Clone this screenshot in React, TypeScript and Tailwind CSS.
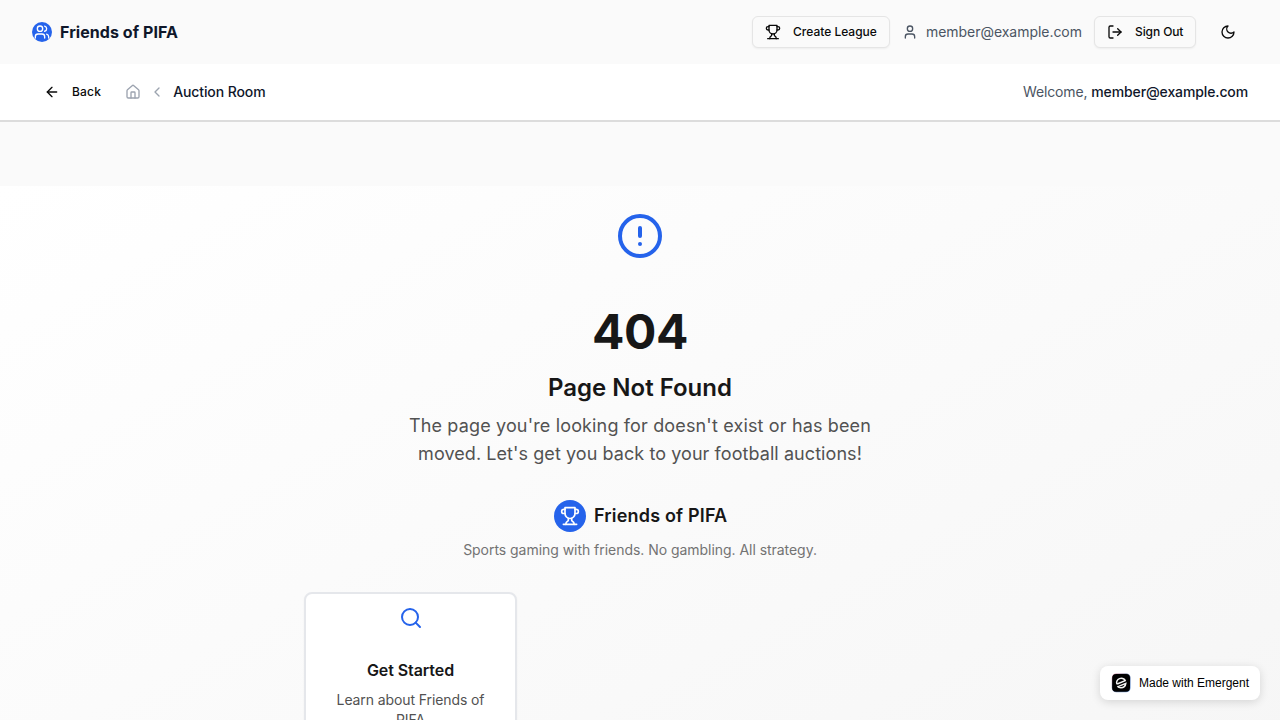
import type { ReactNode } from 'react';
import { ArrowLeft, ChevronLeft, CircleAlert, House, LogOut, Search, User, Users } from 'lucide-react';

function Trophy({ className }: { className: string }) {
  return (
    <svg viewBox="0 0 24 24" fill="none" stroke="currentColor" strokeWidth="2" strokeLinecap="round" strokeLinejoin="round" className={className}>
      <path d="M6 9H4.5a2.5 2.5 0 0 1 0-5H6" />
      <path d="M18 9h1.5a2.5 2.5 0 0 0 0-5H18" />
      <path d="M4 22h16" />
      <path d="M10 14.66V17c0 .55-.47.98-.97 1.21C7.85 18.75 7 20.24 7 22" />
      <path d="M14 14.66V17c0 .55.47.98.97 1.21C16.15 18.75 17 20.24 17 22" />
      <path d="M18 2H6v7a6 6 0 0 0 12 0V2Z" />
    </svg>
  );
}

function Moon({ className }: { className: string }) {
  return (
    <svg viewBox="0 0 24 24" fill="none" stroke="currentColor" strokeWidth="2" strokeLinecap="round" strokeLinejoin="round" className={className}>
      <path d="M12 3a6 6 0 0 0 9 9 9 9 0 1 1-9-9Z" />
    </svg>
  );
}

function OutlineButton({ icon, children }: { icon: ReactNode; children: ReactNode }) {
  return (
    <button className="flex h-8 items-center gap-3 rounded-md border border-[#e5e5e5] bg-[#fafafa] px-3 text-xs font-medium text-[#0a0a0a] shadow-xs">
      {icon}
      {children}
    </button>
  );
}

function Header() {
  return (
    <header className="flex h-16 shrink-0 items-center justify-between bg-[#fafafa] px-8">
      <div className="flex items-center gap-2">
        <div className="flex size-5 items-center justify-center rounded-full bg-[#2563eb]">
          <Users className="size-4 text-white" />
        </div>
        <span className="text-base font-bold tracking-[0.06px] text-[#0f172a]">Friends of PIFA</span>
      </div>
      <div className="flex items-center gap-3">
        <OutlineButton icon={<Trophy className="size-4" />}>
          <span className="w-[84px] text-left whitespace-nowrap">Create League</span>
        </OutlineButton>
        <div className="flex items-center gap-2 text-sm text-[#4b5563]">
          <User className="size-4" />
          <span className="w-[156px] tracking-[-0.04px]">member@example.com</span>
        </div>
        <OutlineButton icon={<LogOut className="size-4" />}>
          <span className="w-12 text-left tracking-[-0.1px] whitespace-nowrap">Sign Out</span>
        </OutlineButton>
        <button className="flex h-8 w-10 items-center justify-center text-[#0a0a0a]">
          <Moon className="size-4" />
        </button>
      </div>
    </header>
  );
}

function Breadcrumbs() {
  return (
    <nav className="flex h-[58px] shrink-0 items-center justify-between border-b-2 border-[#dcdcdc] bg-white px-8">
      <div className="flex items-center">
        <button className="flex items-center gap-3 px-3 text-xs font-medium tracking-[0.2px] text-[#0a0a0a]">
          <ArrowLeft className="size-4" />
          Back
        </button>
        <div className="ml-3 flex items-center gap-2 text-sm">
          <House className="size-4 text-[#9ca3af]" />
          <ChevronLeft className="size-4 text-[#9ca3af]" />
          <span className="font-medium tracking-[-0.1px] text-[#0f172a]">Auction Room</span>
        </div>
      </div>
      <p className="text-sm tracking-[-0.12px] text-[#4b5563]">
        Welcome, <span className="font-medium text-[#0f172a]">member@example.com</span>
      </p>
    </nav>
  );
}

function EmergentBadge() {
  return (
    <div className="absolute right-5 bottom-5 flex h-[34px] w-40 items-center gap-2 rounded-lg bg-white pl-[11px] font-['Liberation_Sans',sans-serif] text-xs text-black shadow-[0_2px_10px_rgba(0,0,0,0.14)]">
      <svg viewBox="0 0 20 20" className="size-5 shrink-0">
        <defs>
          <linearGradient id="badge-edge" x1="0" y1="0" x2="1" y2="1">
            <stop offset="0" stopColor="#ef6a8a" />
            <stop offset="0.4" stopColor="#28396b" />
            <stop offset="1" stopColor="#4b8fe8" />
          </linearGradient>
        </defs>
        <rect x="0.8" y="0.5" width="18.8" height="18.8" rx="4.5" fill="url(#badge-edge)" opacity="0.75" />
        <rect x="1.2" y="1" width="17.8" height="17.8" rx="4" fill="#000" />
        <path d="M6.2 11L14.2 7.6C13.5 6 12 5.2 10.3 5.2C7.7 5.2 5.6 7.2 5.6 9.6C5.6 10.3 5.8 10.8 6.2 11M6.3 13.3C7.2 14.2 8.4 14.7 9.8 14.7C12.4 14.7 14.5 12.9 14.8 10.4L7.6 13.4" fill="none" stroke="#f2f2f2" strokeWidth="1.5" />
      </svg>
      <span className="whitespace-nowrap">Made with Emergent</span>
    </div>
  );
}

function NotFound() {
  return (
    <main className="mt-16 flex h-[720px] shrink-0 flex-col items-center bg-linear-to-br from-white to-[#f5f5f5] pt-[26px] text-center">
      <CircleAlert className="size-12 shrink-0 text-[#2563eb]" />
      <h1 className="mt-12 text-5xl leading-12 font-bold tracking-[-0.4px] text-[#171717]">404</h1>
      <h2 className="mt-4 text-2xl font-semibold text-[#171717]">Page Not Found</h2>
      <p className="mt-2 text-lg leading-7 text-[#525252]">
        <span className="block tracking-[0.15px]">The page you're looking for doesn't exist or has been</span>
        <span className="block tracking-[0.07px]">moved. Let's get you back to your football auctions!</span>
      </p>
      <div className="mt-8 flex items-center gap-2">
        <div className="flex size-8 items-center justify-center rounded-full bg-[#2563eb]">
          <Trophy className="size-5 text-white" />
        </div>
        <span className="w-[132px] text-left text-lg font-semibold tracking-[0.18px] whitespace-nowrap text-[#171717]">Friends of PIFA</span>
      </div>
      <p className="mt-2 text-sm tracking-[-0.04px] text-[#737373]">Sports gaming with friends. No gambling. All strategy.</p>
      <div className="mt-8 grid w-[672px] grid-cols-3 gap-4">
        <div className="flex w-[213px] flex-col items-center rounded-lg border-2 border-[#e5e7eb] bg-white px-4 pt-3 pb-6 shadow-xs">
          <Search className="size-6 text-[#2563eb]" />
          <h3 className="mt-7 text-base font-semibold tracking-[-0.08px] text-[#171717]">Get Started</h3>
          <p className="mt-2 text-sm tracking-[-0.1px] text-[#525252]">Learn about Friends of PIFA</p>
        </div>
      </div>
    </main>
  );
}

export default function App() {
  return (
    <div className="relative flex h-screen flex-col overflow-hidden bg-[#fafafa] font-['Inter',sans-serif] antialiased">
      <Header />
      <Breadcrumbs />
      <NotFound />
      <EmergentBadge />
    </div>
  );
}
